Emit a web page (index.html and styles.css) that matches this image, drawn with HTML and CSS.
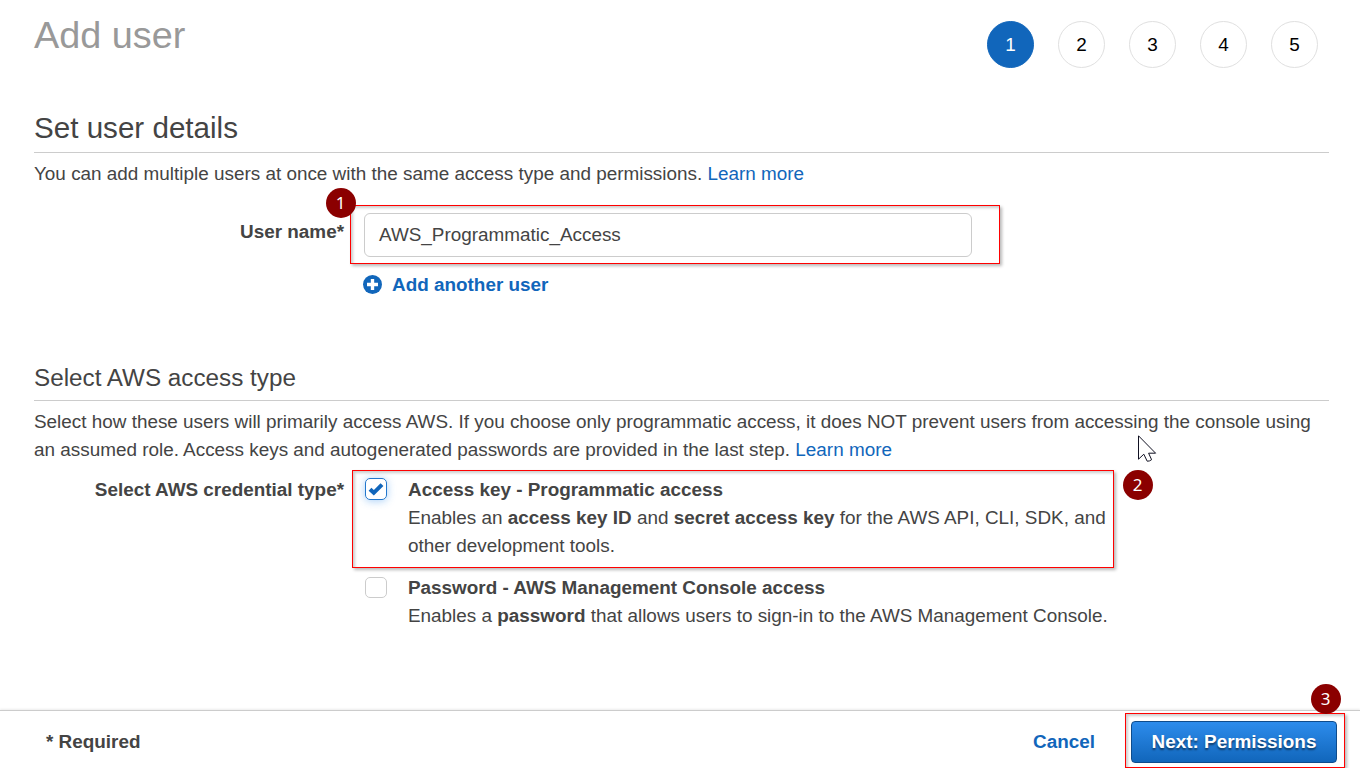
FILE: index.html
```
<!DOCTYPE html>
<html lang="en">
<head>
<meta charset="utf-8">
<title>Add user</title>
<link rel="stylesheet" href="styles.css">
</head>
<body>
<div class="page">
  <header class="header">
    <h1 class="title">Add user</h1>
    <ol class="steps">
      <li class="step step-active">1</li>
      <li class="step">2</li>
      <li class="step">3</li>
      <li class="step">4</li>
      <li class="step">5</li>
    </ol>
  </header>

  <main class="content">
    <section class="details">
      <h2 class="heading">Set user details</h2>
      <p class="intro">You can add multiple users at once with the same access type and permissions. <a class="link" href="#">Learn more</a></p>
      <div class="row row-name">
        <div class="label label-name">User name*</div>
        <div class="field">
          <div class="input">AWS_Programmatic_Access</div>
          <a class="add" href="#">
            <svg class="add-icon" viewBox="0 0 18 18"><circle cx="9" cy="9" r="9" fill="#1166bb"/><path d="M9 3.8v10.4M3.8 9h10.4" stroke="#fff" stroke-width="3.2"/></svg>
            <span>Add another user</span>
          </a>
        </div>
      </div>
    </section>

    <section class="access">
      <h3 class="subheading">Select AWS access type</h3>
      <p class="intro">Select how these users will primarily access AWS. If you choose only programmatic access, it does NOT prevent users from accessing the console using<br>an assumed role. Access keys and autogenerated passwords are provided in the last step. <a class="link" href="#">Learn more</a></p>
      <div class="row row-type">
        <div class="label">Select AWS credential type*</div>
        <div class="options">
          <div class="option">
            <span class="box box-checked"><svg class="check" viewBox="0 0 16 14"><path d="M2 7.2L5.8 10.8L14 2.6" fill="none" stroke="#1166bb" stroke-width="4"/></svg></span>
            <div class="option-text"><b>Access key - Programmatic access</b><br>Enables an <b>access key ID</b> and <b>secret access key</b> for the AWS API, CLI, SDK, and<br>other development tools.</div>
          </div>
          <div class="option">
            <span class="box box-empty"></span>
            <div class="option-text"><b>Password - AWS Management Console access</b><br>Enables a <b>password</b> that allows users to sign-in to the AWS Management Console.</div>
          </div>
        </div>
      </div>
    </section>
  </main>

  <footer class="footer">
    <span class="required">* Required</span>
    <a class="cancel" href="#">Cancel</a>
    <button class="next">Next: Permissions</button>
  </footer>
</div>

<div class="frame frame-1"></div>
<div class="frame frame-2"></div>
<div class="frame frame-3"></div>
<div class="badge badge-1">1</div>
<div class="badge badge-2">2</div>
<div class="badge badge-3">3</div>
<svg class="cursor" viewBox="0 0 19 28"><path d="M.5 .8V24.2L5.8 19.2L9.2 26.2Q11.5 26.4 13.6 24.7L10.6 18.2H17.6Z" fill="#fff" stroke="#112" stroke-width="1"/></svg>
</body>
</html>
```

FILE: styles.css
```
* { box-sizing: border-box; }
body {
  margin: 0;
  background: #fff;
  color: #444;
  font: 18.9px/28px "Liberation Sans", Arial, sans-serif;
  overflow: hidden;
}
.page { display: flex; flex-direction: column; height: 768px; }
h1, h2, h3, p, ol { margin: 0; padding: 0; font-weight: 400; }
a { color: #1166bb; text-decoration: none; }

.header { display: flex; justify-content: space-between; height: 108px; padding: 14px 42px 0 34px; }
.title { color: #999; font-size: 37.8px; line-height: 42px; }
.steps { display: flex; gap: 24px; list-style: none; padding-top: 7px; }
.step {
  width: 47px; height: 47px; border: 1px solid #e0e0e0; border-radius: 50%;
  color: #000; text-align: center; line-height: 46px;
}
.step-active { background: #1166bb; border-color: #1166bb; color: #fff; }

.content { flex: 1; padding: 0 31px 0 34px; white-space: nowrap; }
.heading { height: 45px; border-bottom: 1px solid #ccc; font-size: 29.6px; line-height: 40px; }
.subheading { height: 38px; border-bottom: 1px solid #ccc; font-size: 24.25px; line-height: 30px; }
.intro { padding-top: 7px; }
.row { display: grid; grid-template-columns: 310px 1fr; column-gap: 20px; }
.label { text-align: right; font-weight: 700; }
.row-name { padding-top: 25px; }
.label-name { padding-top: 5px; }
.input { width: 608px; height: 44px; padding: 0 14px; border: 1px solid #ccc; border-radius: 6px; line-height: 42px; }
.add { display: flex; align-items: center; gap: 10px; margin-top: 14px; font-weight: 700; }
.add-icon { width: 19px; height: 19px; margin: 0 0 1px -1px; }
.access { padding-top: 64px; }
.row-type { padding-top: 12px; }
.options { display: grid; gap: 14px; }
.option { display: flex; gap: 21px; }
.box { flex: none; width: 22px; height: 22px; margin: 2px 0 0 1px; border: 1px solid #ccc; border-radius: 5px; }
.box-empty { height: 21px; margin-top: 3px; }
.box-checked { display: flex; align-items: center; justify-content: center; border-color: #2277cc; box-shadow: 0 1px 9px rgba(34, 136, 238, .4); }
.check { width: 16px; height: 14px; }

.footer {
  display: flex; align-items: center; height: 58px; padding: 5px 23px 0 46px;
  border-top: 1px solid #ccc; box-shadow: 0 -1px 2px rgba(0, 0, 0, .08); font-weight: 700;
}
.cancel { margin-left: auto; }
.next {
  width: 206px; height: 42px; margin-left: 36px; padding: 0;
  border: 1px solid #0f4c8c; border-radius: 4px;
  background: linear-gradient(#2d8cec, #1166bb);
  color: #fff; font: inherit; text-shadow: 0 2px 2px rgba(0, 0, 0, .5);
}

/* Walkthrough annotations lying over the page */
.frame { position: absolute; border: 1px solid #f00; box-shadow: 2px 2px 3px rgba(0, 0, 0, .28), inset 2px 2px 3px rgba(0, 0, 0, .2); }
.frame-1 { left: 350px; top: 205px; width: 650px; height: 59px; }
.frame-2 { left: 352px; top: 470px; width: 762px; height: 98px; }
.frame-3 { left: 1125px; top: 713px; width: 220px; height: 55px; }
.badge {
  position: absolute; width: 30px; height: 30px; border-radius: 50%;
  background: #8b0000; color: #fff; text-align: center; font: 17px/29px "Noto Sans", sans-serif;
}
.badge-1 { left: 325.5px; top: 187.5px; }
.badge-2 { left: 1122.5px; top: 469.5px; }
.badge-3 { left: 1310.5px; top: 683.5px; }
.cursor { position: absolute; left: 1138px; top: 435px; width: 19px; height: 28px; }
```
